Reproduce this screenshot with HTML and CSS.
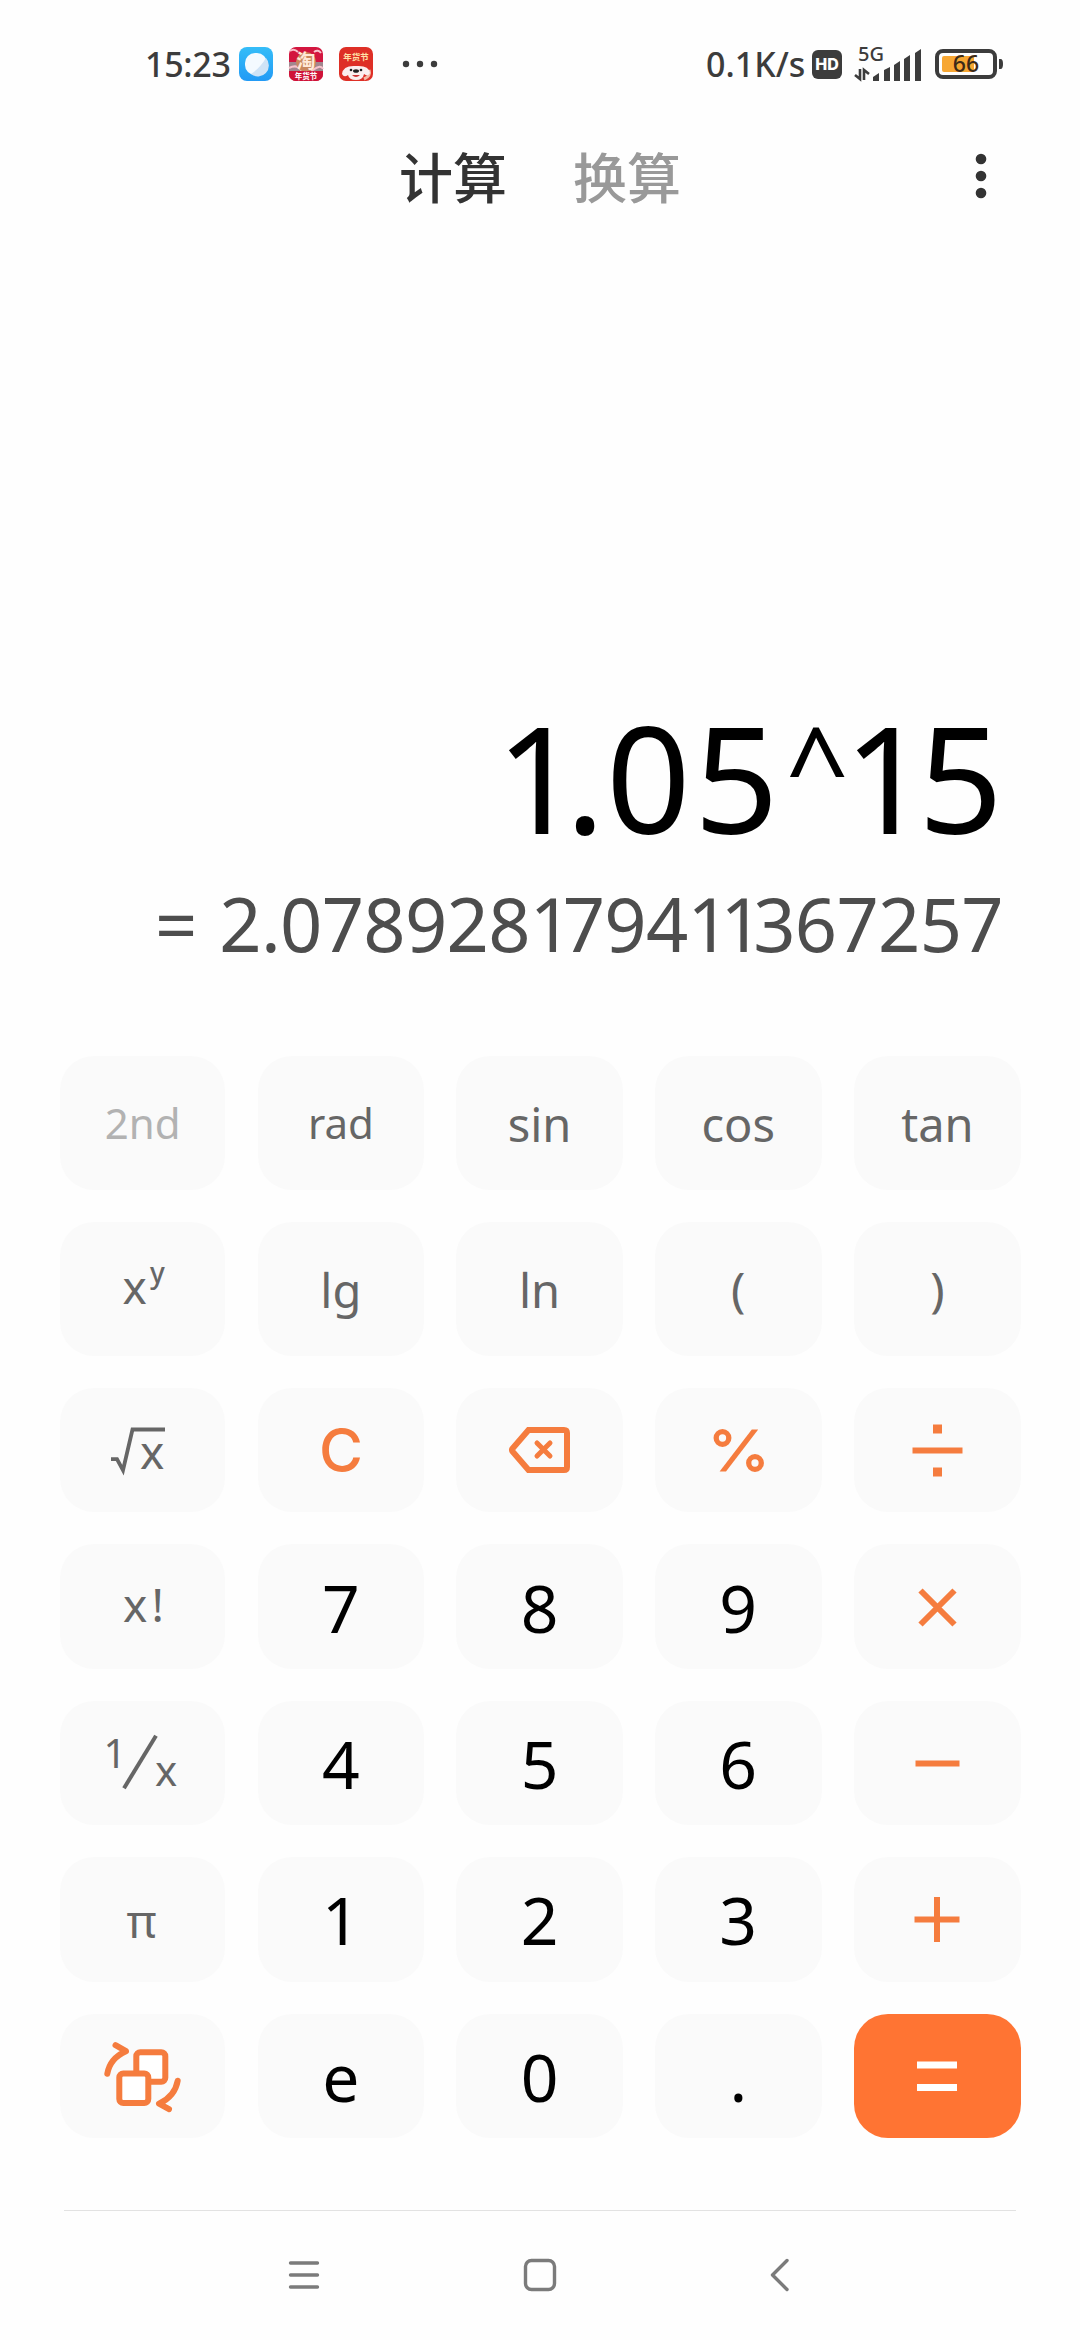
FILE: index.html
```html
<!DOCTYPE html>
<html lang="zh-CN">
<head>
<meta charset="utf-8">
<title>计算器</title>
<link rel="stylesheet" href="styles.css">
</head>
<body>
<div class="phone">
  <header class="status">
    <span class="clock">15:23</span>
    <svg class="app" viewBox="0 0 34 34">
      <defs><linearGradient id="sky" x1="0" y1="0" x2="0" y2="1"><stop offset="0" stop-color="#35bdf8"/><stop offset="1" stop-color="#229af5"/></linearGradient></defs>
      <rect width="34" height="34" rx="8" fill="url(#sky)"/>
      <rect x="6" y="6" width="22" height="22" rx="10" fill="#f4faff"/>
      <path d="M27 11a11 11 0 0 1-15 16Q21 21 27 11z" fill="#cfe3f6"/>
    </svg>
    <svg class="app" viewBox="0 0 34 34">
      <rect width="34" height="34" rx="7" fill="#d3163f"/>
      <path d="M0 15h34v10H0z" fill="#a2868e"/>
      <path d="M1 4q4-3 8 1M25 5q4-3 7 1M0 21q8-4 12 2t12 0 10-1" fill="none" stroke="#f7c2cb" stroke-width="2"/>
      <circle cx="17" cy="15" r="10" fill="#c9875d"/>
      <text class="cjk" x="17" y="20.500" font-size="19" font-weight="700" text-anchor="middle" fill="#ffe9d8">淘</text>
      <path d="M0 24h34v3a7 7 0 0 1-7 7H7a7 7 0 0 1-7-7z" fill="#cf1238"/>
      <text class="cjk" x="17" y="31.800" font-size="7.500" font-weight="700" text-anchor="middle" fill="#fff">年货节</text>
    </svg>
    <svg class="app" viewBox="0 0 34 34">
      <rect width="34" height="34" rx="7" fill="#de2f26"/>
      <text class="cjk" x="17" y="13" font-size="8.500" font-weight="700" text-anchor="middle" fill="#ffe2a8">年货节</text>
      <path d="M25 32q7-3 5-9" fill="none" stroke="#f5b9a6" stroke-width="3"/>
      <path d="M3 27q1-9 14-8 13-1 14 7-2 4-6 1-1 6-8 6t-8-5q-4 3-6-1z" fill="#fbeeee"/>
      <circle cx="12" cy="23" r="1.300" fill="#222"/><circle cx="22" cy="23" r="1.300" fill="#222"/>
      <ellipse cx="17" cy="24" rx="3" ry="1.800" fill="#222"/>
      <path d="M13 28q4 4 8 0z" fill="#c33"/>
    </svg>
    <svg class="more" viewBox="0 0 36 8"><circle cx="4" cy="4" r="3.200"/><circle cx="18" cy="4" r="3.200"/><circle cx="32" cy="4" r="3.200"/></svg>
    <span class="speed">0.1K/s</span>
    <span class="hd">HD</span>
    <svg class="signal" viewBox="0 -8 68 52">
      <text x="4" y="16" font-size="20">5G</text>
      <path d="M6 24v10L1 30M6 34M10 35V25l5 4" fill="none" stroke="#3c3c3c" stroke-width="2.600"/>
      <path d="M19 36v-4l6-4v8zM30 36V25l6-3v14zM40 36V20l6-4v20zM50 36V14l6-4v26zM61 36V8l6-4v32z"/>
    </svg>
    <svg class="battery" viewBox="0 0 68 30">
      <rect x="2" y="2" width="58" height="26" rx="6" fill="none" stroke="#3c3c3c" stroke-width="4"/>
      <rect x="7" y="7" width="32" height="16" rx="2" fill="#f7a733"/>
      <path d="M64 10h1.500q2.500 0 2.500 5t-2.500 5H64z"/>
      <text x="31" y="23.300" font-size="23" text-anchor="middle" fill="#3c2a18">66</text>
    </svg>
  </header>

  <nav class="tabs">
    <span class="tab active">计算</span>
    <span class="tab">换算</span>
    <svg class="menu" viewBox="0 0 12 46"><circle cx="6" cy="6" r="5.300"/><circle cx="6" cy="23" r="5.300"/><circle cx="6" cy="40" r="5.300"/></svg>
  </nav>

  <main class="display">
    <div class="expr"><span class="first">1</span>.<span class="zero">0</span>5<span class="caret">^</span><span class="one">1</span>5</div>
    <div class="result"><span class="eq">=</span><span class="value">2.078928<b>1</b>794<b>1</b><b>1</b>367257</span></div>
  </main>

  <section class="keys">
    <div class="key small muted">2nd</div>
    <div class="key small">rad</div>
    <div class="key fn">sin</div>
    <div class="key fn">cos</div>
    <div class="key fn">tan</div>

    <div class="key"><svg class="face" viewBox="0 0 164 134"><text x="62.500" y="82" font-size="46">x</text><text x="90" y="60.500" font-size="28" font-weight="500">y</text></svg></div>
    <div class="key fn">lg</div>
    <div class="key fn">ln</div>
    <div class="key paren">(</div>
    <div class="key paren">)</div>

    <div class="key"><svg class="face" viewBox="0 0 164 124"><path d="M51 71h6l6 11 9.500-40.700H105" fill="none" stroke="#666" stroke-width="3.800"/><text x="80" y="81" font-size="46">x</text></svg></div>
    <div class="key clear">C</div>
    <div class="key"><svg class="op" viewBox="0 0 64 64"><path d="M20.500 11.500H56q3 0 3 3v34q0 3-3 3H20.500L4.500 33q-1-1.500 0-3z" transform="translate(0 .5)"/><path d="M29 25l13 13M42 25L29 38" stroke-linecap="round" stroke-width="5"/></svg></div>
    <div class="key"><svg class="op" viewBox="0 0 64 64"><circle cx="16.500" cy="20" r="6.300" stroke-width="5.300"/><circle cx="49" cy="45" r="6.300" stroke-width="5.300"/><path d="M45.800 11.500h6.400L20 53.500h-6.400z" fill="#f57c3e" stroke="none"/></svg></div>
    <div class="key"><svg class="op" viewBox="0 0 64 64"><path d="M7.500 32.500h50"/><path d="M28 6.500h9v9h-9zM28 49.500h9v9h-9z" fill="#f57c3e" stroke="none"/></svg></div>

    <div class="key"><svg class="face" viewBox="0 0 164 124"><text x="63" y="77.500" font-size="46">x</text><text x="91.500" y="77.500" font-size="46">!</text></svg></div>
    <div class="key num">7</div>
    <div class="key num">8</div>
    <div class="key num">9</div>
    <div class="key"><svg class="op" viewBox="0 0 64 64"><path d="M15.500 15.500l34 34M49.500 15.500l-34 34"/></svg></div>

    <div class="key"><svg class="face" viewBox="0 0 164 124"><text x="43.500" y="67" font-size="40">1</text><path d="M96 34.500L64 87" stroke="#666" stroke-width="4" fill="none"/><text x="95" y="84.500" font-size="42">x</text></svg></div>
    <div class="key num">4</div>
    <div class="key num">5</div>
    <div class="key num">6</div>
    <div class="key"><svg class="op" viewBox="0 0 64 64"><path d="M10.500 32.500h44"/></svg></div>

    <div class="key"><svg class="face" viewBox="0 0 164 124"><text x="81.500" y="80.500" font-size="46" text-anchor="middle">π</text></svg></div>
    <div class="key num">1</div>
    <div class="key num">2</div>
    <div class="key num">3</div>
    <div class="key"><svg class="op" viewBox="0 0 64 64"><path d="M9.500 32.500h45M32 10v45"/></svg></div>

    <div class="key"><svg class="face" viewBox="0 0 164 124"><g fill="#fff" stroke="#f57c3e" stroke-width="6" stroke-linecap="round" stroke-linejoin="round"><rect x="76.300" y="38" width="29" height="29.500" rx="4"/><rect x="59.300" y="59.300" width="29" height="29.500" rx="4"/><path fill="none" d="M47.300 59.500Q50 44 66 37L55.500 31M117.700 66.500Q115 82 99 89.500L109 95"/></g></svg></div>
    <div class="key num">e</div>
    <div class="key num">0</div>
    <div class="key num">.</div>
    <div class="key equals"><svg class="op" viewBox="0 0 64 64"><path d="M12 21h40M12 43.500h40"/></svg></div>
  </section>

  <footer class="sysnav">
    <svg viewBox="0 0 36 36"><path d="M4.500 6h27M4.500 18h27M4.500 30h27"/></svg>
    <svg viewBox="0 0 36 36"><rect x="3.500" y="3.500" width="29" height="29" rx="6"/></svg>
    <svg viewBox="0 0 36 36"><path d="M29 3.500L14.500 18 29 32.500"/></svg>
  </footer>
</div>
</body>
</html>
```
FILE: styles.css
```css
* { box-sizing: border-box; }

body {
  margin: 0;
  background: #fefefe;
  font-family: "Noto Sans", "Noto Sans CJK SC", sans-serif;
}

svg { display: block; overflow: visible; }

.phone {
  width: 1080px;
  height: 2340px;
  display: flex;
  flex-direction: column;
  overflow: hidden;
}

.status {
  height: 128px;
  padding-left: 145px;
  display: flex;
  align-items: center;
  color: #3c3c3c;
  fill: #3c3c3c;
  font-weight: 500;
}
.clock {
  width: 94px;
  font-size: 34px;
  letter-spacing: -0.3px;
}
.app { width: 34px; height: 34px; margin-right: 16px; }
.cjk { font-family: "Noto Sans CJK SC", sans-serif; }
.more { width: 36px; height: 8px; margin-left: 13px; }
.speed {
  width: 106px;
  margin-left: 268px;
  font-size: 34px;
  white-space: nowrap;
}
.hd {
  width: 30px;
  height: 29px;
  border-radius: 6px;
  background: #3c3c3c;
  color: #fff;
  font: 800 16px/29px Inter, sans-serif;
  text-align: center;
}
.signal { width: 68px; height: 52px; margin: -2px 0 0 12px; }
.battery { width: 68px; height: 30px; margin-left: 13px; }

.tabs {
  height: 96px;
  padding: 0 93px 0 399px;
  display: flex;
  align-items: center;
}
.tab {
  width: 174px;
  color: #999;
  font: 500 54px/94px "Noto Sans CJK SC", sans-serif;
}
.active { color: #333; }
.menu { width: 12px; height: 46px; margin-left: auto; fill: #333; }

.display {
  height: 832px;
  padding-right: 77px;
  display: flex;
  flex-direction: column;
  justify-content: flex-end;
  align-items: flex-end;
}
.expr {
  display: flex;
  color: #000;
  font-size: 148px;
  line-height: 160px;
  margin-bottom: 3px;
}
.first { letter-spacing: -15px; }
.zero { margin: 0 3.5px 0 1px; }
.caret {
  margin: -14px 0 0 7px;
  font-size: 110px;
  letter-spacing: -5px;
}
.one { letter-spacing: -10px; }
.result {
  width: 848px;
  height: 100px;
  margin: 14px 0 82px;
  display: flex;
  justify-content: space-between;
  color: #4d4d4d;
  font-size: 74px;
  line-height: 100px;
}
.value { letter-spacing: -0.7px; }
.value b {
  letter-spacing: -9.5px;
  font-weight: 400;
}

.keys {
  padding: 0 59px 0 60px;
  display: grid;
  grid-template-columns: 165.3px 166.4px 166.1px 166.6px 167px;
  grid-template-rows: 134px 134px repeat(5, 124.4px);
  gap: 32px 32.4px;
}
.key {
  border-radius: 34px;
  background: #fafafa;
  color: #666;
  display: flex;
  align-items: center;
  justify-content: center;
  line-height: 1;
}
.fn { font-size: 47px; padding-top: 3px; }
.small { font-size: 42px; }
.muted { color: #b2b2b2; }
.paren { font-size: 48px; }
.num { color: #000; font-size: 66px; }
.clear { color: #f57c3e; font: 500 60px/1 Inter, sans-serif; }
.face { width: 164px; height: 100%; margin-left: -1.3px; fill: #666; }
.op { width: 64px; height: 64px; fill: none; stroke: #f57c3e; stroke-width: 6; }
.equals { background: #ff7433; }
.equals .op { stroke: #fff; stroke-width: 7; }

.sysnav {
  width: 952px;
  height: 130px;
  margin: 72px auto 0;
  padding: 46px 0 0 222px;
  border-top: 1px solid #e2e2e2;
  display: flex;
  gap: 200px;
}
.sysnav svg {
  width: 36px;
  height: 36px;
  fill: none;
  stroke: #7b7b7b;
  stroke-width: 3.4;
  stroke-linecap: round;
  stroke-linejoin: round;
}
```
